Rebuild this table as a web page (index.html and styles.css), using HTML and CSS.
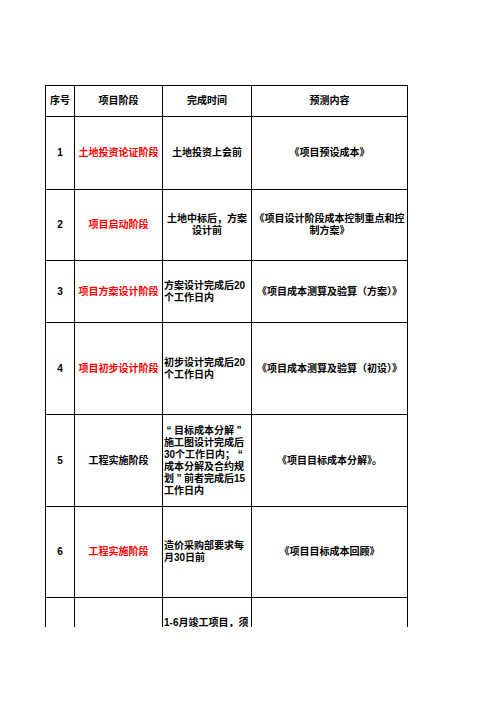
FILE: index.html
```html
<!DOCTYPE html>
<html lang="zh">
<head>
<meta charset="utf-8">
<link rel="stylesheet" href="styles.css">
</head>
<body>
<div class="page">
  <div class="clip">
    <div class="grid">
      <div class="c">序号</div>
      <div class="c">项目阶段</div>
      <div class="c">完成时间</div>
      <div class="c">预测内容</div>

      <div class="c">1</div>
      <div class="c red">土地投资论证阶段</div>
      <div class="c">土地投资上会前</div>
      <div class="c">《项目预设成本》</div>

      <div class="c">2</div>
      <div class="c red">项目启动阶段</div>
      <div class="c">土地中标后，方案<br>设计前</div>
      <div class="c">《项目设计阶段成本控制重点和控<br>制方案》</div>

      <div class="c">3</div>
      <div class="c red">项目方案设计阶段</div>
      <div class="c l">方案设计完成后20<br>个工作日内</div>
      <div class="c">《项目成本测算及验算（方案）》</div>

      <div class="c">4</div>
      <div class="c red">项目初步设计阶段</div>
      <div class="c l">初步设计完成后20<br>个工作日内</div>
      <div class="c">《项目成本测算及验算（初设）》</div>

      <div class="c">5</div>
      <div class="c">工程实施阶段</div>
      <div class="c l"><div><span class="q">“</span>目标成本分解<span class="q">”</span><br>施工图设计完成后<br>30个工作日内；<span class="q">“</span><br>成本分解及合约规<br>划<span class="q">”</span>前者完成后15<br>工作日内</div></div>
      <div class="c">《项目目标成本分解》。</div>

      <div class="c">6</div>
      <div class="c red">工程实施阶段</div>
      <div class="c l">造价采购部要求每<br>月30日前</div>
      <div class="c">《项目目标成本回顾》</div>

      <div class="c"></div>
      <div class="c"></div>
      <div class="c l top">1-6月竣工项目，须</div>
      <div class="c"></div>
    </div>
  </div>
</div>
</body>
</html>
```

FILE: styles.css
```css
html, body {
  margin: 0;
  padding: 0;
  background: #ffffff;
}
.page {
  width: 496px;
  height: 702px;
  padding: 85px 0 0 45px;
  box-sizing: border-box;
  font-family: "Liberation Sans", "Noto Sans CJK SC", sans-serif;
  font-weight: 700;
  font-size: 10px;
  line-height: 12px;
  color: #000000;
}
.clip {
  width: 363px;
  height: 542px;
  overflow: hidden;
}
.grid {
  display: grid;
  grid-template-columns: 28px 87px 88px 155px;
  grid-template-rows: 30px 72px 70px 61px 91px 91px 90px 100px;
  gap: 1px;
  padding: 1px;
  background: #000000;
  width: 363px;
  box-sizing: border-box;
}
.c {
  background: #ffffff;
  display: flex;
  align-items: center;
  justify-content: center;
  text-align: center;
  overflow: hidden;
  white-space: nowrap;
}
.red {
  color: #ff0000;
}
.l {
  justify-content: flex-start;
  text-align: left;
  padding-left: 1px;
}
.top {
  align-items: flex-start;
  padding-top: 19px;
}
.q {
  display: inline-block;
  width: 10px;
  text-align: center;
}
```
